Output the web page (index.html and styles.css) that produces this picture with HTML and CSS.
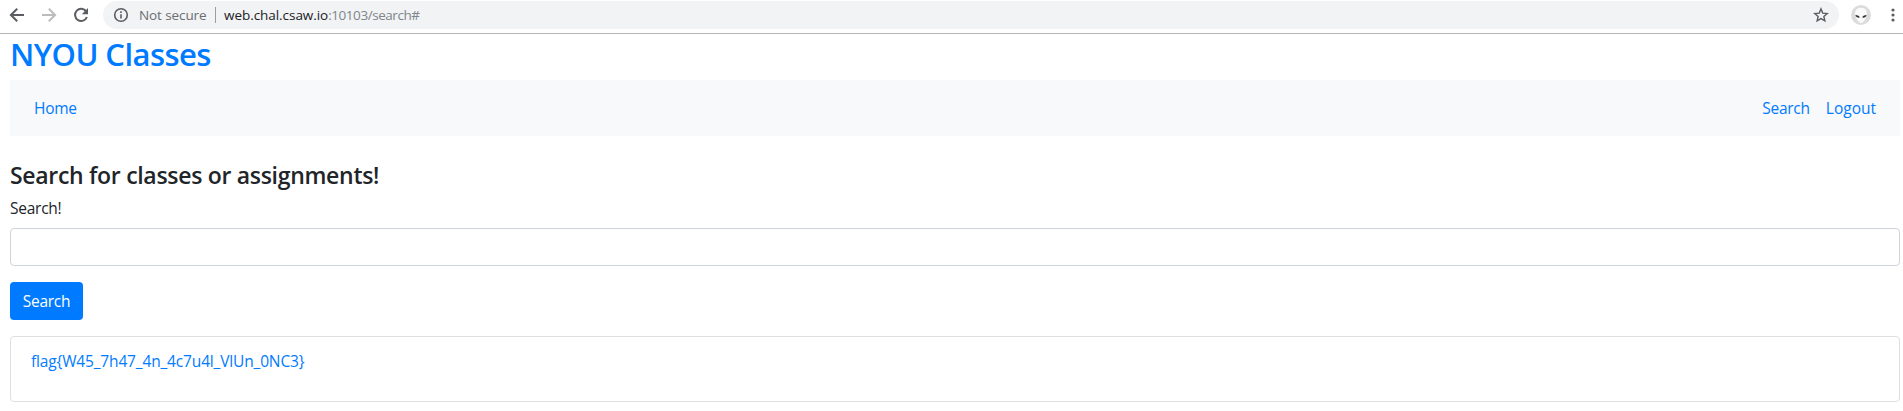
FILE: index.html
```html
<!DOCTYPE html>
<html lang="en">
<head>
<meta charset="utf-8">
<title>NYOU Classes</title>
<link rel="stylesheet" href="styles.css">
</head>
<body>
<header class="toolbar">
  <svg class="icon back" viewBox="0 0 16 16"><path d="M15 8H2M8.200 1.700 1.900 8l6.300 6.300"/></svg>
  <svg class="icon forward" viewBox="0 0 16 16"><path d="M1 8h13M7.800 1.700 14.100 8l-6.300 6.300"/></svg>
  <svg class="icon reload" viewBox="0 0 16 16"><path d="M13.200 4.400A6.100 6.100 0 1 0 13.900 10"/><path class="solid" d="M15 1v6.200H8.800z"/></svg>
  <div class="omnibox">
    <svg class="icon info" viewBox="0 0 16 16"><circle cx="8" cy="8" r="6.300"/><path d="M8 7.200v4.200M8 4.300v1.700"/></svg>
    <span class="security">Not secure</span>
    <span class="divider"></span>
    <span class="url"><span class="host">web.chal.csaw.io</span>:10103/search#</span>
    <svg class="icon star" viewBox="0 0 16 16"><path d="m8 1.900 1.750 4.200 4.500.4-3.400 3 1 4.400L8 11.600l-3.850 2.300 1-4.400-3.400-3 4.500-.4z"/></svg>
  </div>
  <svg class="avatar" viewBox="0 0 20 20"><circle cx="10" cy="10" r="10" fill="#dcdcdc"/><path d="M10 2.700c4.600 0 6.300 3 5.700 7.100-.5 3.700-3.200 8.200-5.700 8.200s-5.200-4.500-5.700-8.200C3.700 5.700 5.400 2.700 10 2.700z" fill="#fafafa"/><path d="M4.400 9.900c2.500.1 4 .8 4.400 2.700-2.300.4-3.900-.6-4.400-2.700zM15.600 9.900c-2.500.1-4 .8-4.400 2.700 2.300.4 3.900-.6 4.400-2.700z" fill="#333"/></svg>
  <svg class="menu" viewBox="0 0 4 14"><circle cx="2" cy="2" r="1.600"/><circle cx="2" cy="7" r="1.600"/><circle cx="2" cy="12" r="1.600"/></svg>
</header>
<main class="page">
  <h2 class="brand"><a href="#">NYOU Classes</a></h2>
  <nav class="navbar">
    <a class="nav-link home" href="#">Home</a>
    <div class="nav-right"><a class="nav-link search-link" href="#">Search</a><a class="nav-link logout" href="#">Logout</a></div>
  </nav>
  <h4 class="heading">Search for classes or assignments!</h4>
  <form class="form">
    <label class="label" for="q">Search!</label>
    <input class="input" id="q" type="text">
    <button class="button" type="button">Search</button>
  </form>
  <section class="card"><a class="flag" href="#">flag{W45_7h47_4n_4c7u4l_VlUn_0NC3}</a></section>
</main>
</body>
</html>
```
FILE: styles.css
```css
* { box-sizing: border-box; }
body {
  margin: 0;
  background: #fff;
  color: #212529;
  font: 15.5px/24px "Open Sans", "Noto Sans", sans-serif;
  letter-spacing: -0.25px;
}
a { color: #007bff; text-decoration: none; }
.toolbar {
  display: flex;
  align-items: center;
  height: 34px;
  padding: 0 7px 4px 9px;
  border-bottom: 1px solid #b5b4b6;
  letter-spacing: 0;
}
.icon {
  flex: none;
  width: 16px;
  height: 16px;
  fill: none;
  stroke: #5a5d61;
  stroke-width: 2;
}
.icon .solid { fill: #5a5d61; stroke: none; }
.forward { margin-left: 16px; stroke: #babcbe; }
.reload { margin-left: 16px; }
.omnibox {
  display: flex;
  flex: 1;
  align-items: center;
  height: 28px;
  margin-left: 14px;
  padding: 0 10px;
  border-radius: 14px;
  background: #f1f3f4;
  font-size: 13.5px;
  color: #80868b;
}
.info { stroke-width: 1.6; }
.security { width: 67px; margin-left: 10px; color: #6a6e73; letter-spacing: -0.1px; white-space: nowrap; }
.divider { width: 1px; height: 16px; margin: 0 8px 0 9px; background: #9a9da1; }
.url { letter-spacing: -0.45px; white-space: nowrap; }
.host { color: #202124; letter-spacing: -0.05px; }
.star { margin-left: auto; stroke-width: 1.4; }
.avatar { width: 20px; height: 20px; margin-left: 12px; }
.menu { width: 4px; height: 14px; margin-left: 20px; margin-right: 1px; fill: #5a5d61; }
.page { padding: 0 3px 0 10px; }
.brand {
  margin: 0 0 7px;
  padding-top: 1px;
  font-size: 31px;
  font-weight: 600;
  letter-spacing: -0.55px;
  line-height: 38px;
}
.navbar {
  display: flex;
  justify-content: space-between;
  padding: 8px 16px;
  background: #f8f9fa;
}
.nav-right { display: flex; }
.nav-link { padding: 8px; }
.logout { letter-spacing: 0; }
.heading {
  margin: 25px 0 7px;
  font-size: 23px;
  font-weight: 600;
  letter-spacing: -0.3px;
  line-height: 29px;
}
.form { display: flex; flex-direction: column; align-items: flex-start; margin-top: -1px; }
.label { margin-bottom: 8px; }
.input {
  width: 100%;
  height: 38px;
  border: 1px solid #ced4da;
  border-radius: 4px;
  background: #fff;
}
.button {
  width: 73px;
  height: 38px;
  margin: 16px 0;
  padding: 0;
  border: 0;
  border-radius: 4px;
  background: #007bff;
  color: #fff;
  font: inherit;
  letter-spacing: inherit;
}
.card {
  height: 66px;
  padding: 12px 20px;
  border: 1px solid #dfdfdf;
  border-radius: 4px;
}
.flag { letter-spacing: -0.16px; }
```
